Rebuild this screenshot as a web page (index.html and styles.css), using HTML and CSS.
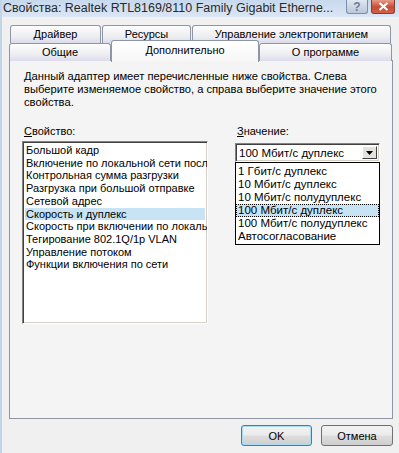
FILE: index.html
```html
<!DOCTYPE html>
<html lang="ru">
<head>
    <meta charset="UTF-8">
    <title>Свойства: Realtek RTL8169/8110 Family Gigabit Ethernet NIC</title>
    <link rel="stylesheet" href="styles.css">
</head>
<body>
    <div class="window">
        <div class="titlebar">
            <span class="title">Свойства: Realtek RTL8169/8110 Family Gigabit Etherne...</span>
            <span class="tb-btn tb-help">?</span>
            <span class="tb-btn tb-close">
                <svg width="11" height="9" viewBox="0 0 11 9"><path d="M1.5 1 L9.5 8 M9.5 1 L1.5 8" stroke="#fff" stroke-width="2.2"/></svg>
            </span>
        </div>

        <div class="content">
            <div class="tabs">
                <div class="tab-row row-back">
                    <div class="tab t-driver">Драйвер</div>
                    <div class="tab t-res">Ресурсы</div>
                    <div class="tab t-power">Управление электропитанием</div>
                </div>
                <div class="tab-row row-front">
                    <div class="tab t-general">Общие</div>
                    <div class="tab t-adv active">Дополнительно</div>
                    <div class="tab t-about">О программе</div>
                </div>
            </div>

            <div class="panel">
                <p class="desc">Данный адаптер имеет перечисленные ниже свойства. Слева выберите изменяемое свойство, а справа выберите значение этого свойства.</p>

                <div class="fields">
                    <div class="col-left">
                        <div class="label"><u>С</u>войство:</div>
                        <ul class="listbox">
                            <li>Большой кадр</li>
                            <li>Включение по локальной сети после отключения</li>
                            <li>Контрольная сумма разгрузки</li>
                            <li>Разгрузка при большой отправке</li>
                            <li>Сетевой адрес</li>
                            <li class="sel">Скорость и дуплекс</li>
                            <li>Скорость при включении по локальной сети</li>
                            <li>Тегирование 802.1Q/1p VLAN</li>
                            <li>Управление потоком</li>
                            <li>Функции включения по сети</li>
                        </ul>
                    </div>
                    <div class="col-right">
                        <div class="label"><u>З</u>начение:</div>
                        <div class="combo">
                            <span class="combo-text">100 Мбит/с дуплекс</span>
                            <span class="combo-arrow">
                                <svg width="7" height="4" viewBox="0 0 7 4"><path d="M0 0 H7 L3.5 4 Z" fill="#000"/></svg>
                            </span>
                        </div>
                        <ul class="dropdown">
                            <li>1 Гбит/с дуплекс</li>
                            <li>10 Мбит/с дуплекс</li>
                            <li>10 Мбит/с полудуплекс</li>
                            <li class="sel">100 Мбит/с дуплекс</li>
                            <li>100 Мбит/с полудуплекс</li>
                            <li>Автосогласование</li>
                        </ul>
                    </div>
                </div>
            </div>

            <div class="buttons">
                <button class="btn btn-default">OK</button>
                <button class="btn">Отмена</button>
            </div>
        </div>
    </div>
</body>
</html>
```

FILE: styles.css
```css
body {
    margin: 0;
    background-color: #f0f0f0;
    font-family: "Liberation Sans", Arial, sans-serif;
    font-size: 11px;
    color: #000;
}

.window {
    width: 399px;
    height: 453px;
    box-sizing: border-box;
    border-left: 2px solid #c3d4ea;
    overflow: hidden;
}

.titlebar {
    height: 17px;
    display: flex;
    align-items: flex-start;
    padding-left: 1px;
    background: linear-gradient(#c8d8ed, #dbe6f4);
}

.title {
    font-size: 12.5px;
    line-height: 16px;
    color: #2a2a2a;
    white-space: nowrap;
}

.tb-btn {
    height: 14px;
    box-sizing: border-box;
    border: 1px solid #7d8fa8;
    border-top: none;
    border-radius: 0 0 3px 3px;
    display: flex;
    align-items: center;
    justify-content: center;
}

.tb-help {
    width: 22px;
    margin-left: auto;
    background: linear-gradient(#dfe7f1, #b9c8da);
    color: #6b7d96;
    font-weight: bold;
    font-size: 12px;
}

.tb-close {
    width: 24px;
    margin: 0 4px 0 3px;
    border-color: #8a3a30;
    background: linear-gradient(#e79a86, #c84a33 55%, #d2644a);
}

.content {
    padding: 8px 6px 0 7px;
}

/* tabs */
.tab-row {
    display: flex;
    height: 18px;
}

.row-back {
    padding-left: 1px;
    gap: 1px;
}

.row-front {
    margin-bottom: -1px;
}

.tab {
    box-sizing: border-box;
    height: 18px;
    border: 1px solid #8f96a3;
    border-bottom: none;
    border-radius: 3px 3px 0 0;
    background: linear-gradient(#fdfdfd, #eeeef2 60%, #dcdcec);
    text-align: center;
    line-height: 17px;
    color: #000;
}

.t-driver { width: 91px; }
.t-res { width: 89px; }
.t-power { width: 199px; }
.t-general { width: 102px; }
.t-about { width: 133px; }

.tab.active {
    position: relative;
    z-index: 1;
    width: 148px;
    height: 22px;
    margin-top: -3px;
    background: linear-gradient(#ffffff, #f6f6f6);
    line-height: 18px;
}

.panel {
    box-sizing: border-box;
    height: 359px;
    border: 1px solid #8f96a3;
    background-color: #f4f4f4;
    padding: 9px 12px 0 12px;
}

.desc {
    margin: 0;
    padding-left: 2px;
    line-height: 13px;
    font-size: 11.2px;
}

.fields {
    display: flex;
    justify-content: space-between;
    margin-top: 16px;
}

.label {
    line-height: 13px;
    padding-left: 2px;
}

.col-left {
    width: 186px;
}

.col-right {
    width: 145px;
}

ul {
    list-style: none;
    margin: 0;
    padding: 0;
}

.listbox {
    box-sizing: border-box;
    height: 183px;
    margin-top: 3px;
    background: #fff;
    border: 1px solid;
    border-color: #828282 #ffffff #ffffff #828282;
    box-shadow: inset 1px 1px 0 #404040, inset -1px -1px 0 #d4d0c8;
    padding: 2px 2px 0 2px;
    overflow: hidden;
}

.listbox li {
    line-height: 12.7px;
    white-space: nowrap;
    padding-left: 1px;
}

.listbox li.sel {
    background-color: #c8e3f4;
}

.combo {
    box-sizing: border-box;
    height: 19px;
    margin-top: 5px;
    display: flex;
    align-items: center;
    background: #fff;
    border: 1px solid;
    border-color: #828282 #ffffff #ffffff #828282;
    box-shadow: inset 1px 1px 0 #404040, inset -1px -1px 0 #d4d0c8;
    padding: 2px 2px 2px 3px;
}

.combo-text {
    flex: 1;
    white-space: nowrap;
    font-size: 11.5px;
}

.combo-arrow {
    width: 15px;
    height: 13px;
    box-sizing: border-box;
    border: 1px solid;
    border-color: #ffffff #404040 #404040 #ffffff;
    background: #e4e2dc;
    display: flex;
    align-items: center;
    justify-content: center;
}

.dropdown {
    box-sizing: border-box;
    border: 1px solid #000;
    background: #fff;
    padding: 2px 0 1px 0;
}

.dropdown li {
    line-height: 13px;
    padding-left: 2px;
    white-space: nowrap;
    font-size: 11.5px;
}

.dropdown li.sel {
    background-color: #c8e3f4;
    outline: 1px dotted #000;
    outline-offset: -1px;
}

.buttons {
    display: flex;
    justify-content: flex-end;
    gap: 9px;
    margin-top: 6px;
}

.btn {
    width: 72px;
    height: 21px;
    border: 1px solid #707070;
    border-radius: 3px;
    background: linear-gradient(#f2f2f2 0%, #ebebeb 48%, #dddddd 52%, #cfcfcf 100%);
    font-family: "Liberation Sans", Arial, sans-serif;
    font-size: 11px;
    color: #000;
    padding: 0;
}

.btn-default {
    width: 71px;
    border-color: #3c7fb1;
    box-shadow: inset 0 0 0 1px #a8dcf6;
}
```
